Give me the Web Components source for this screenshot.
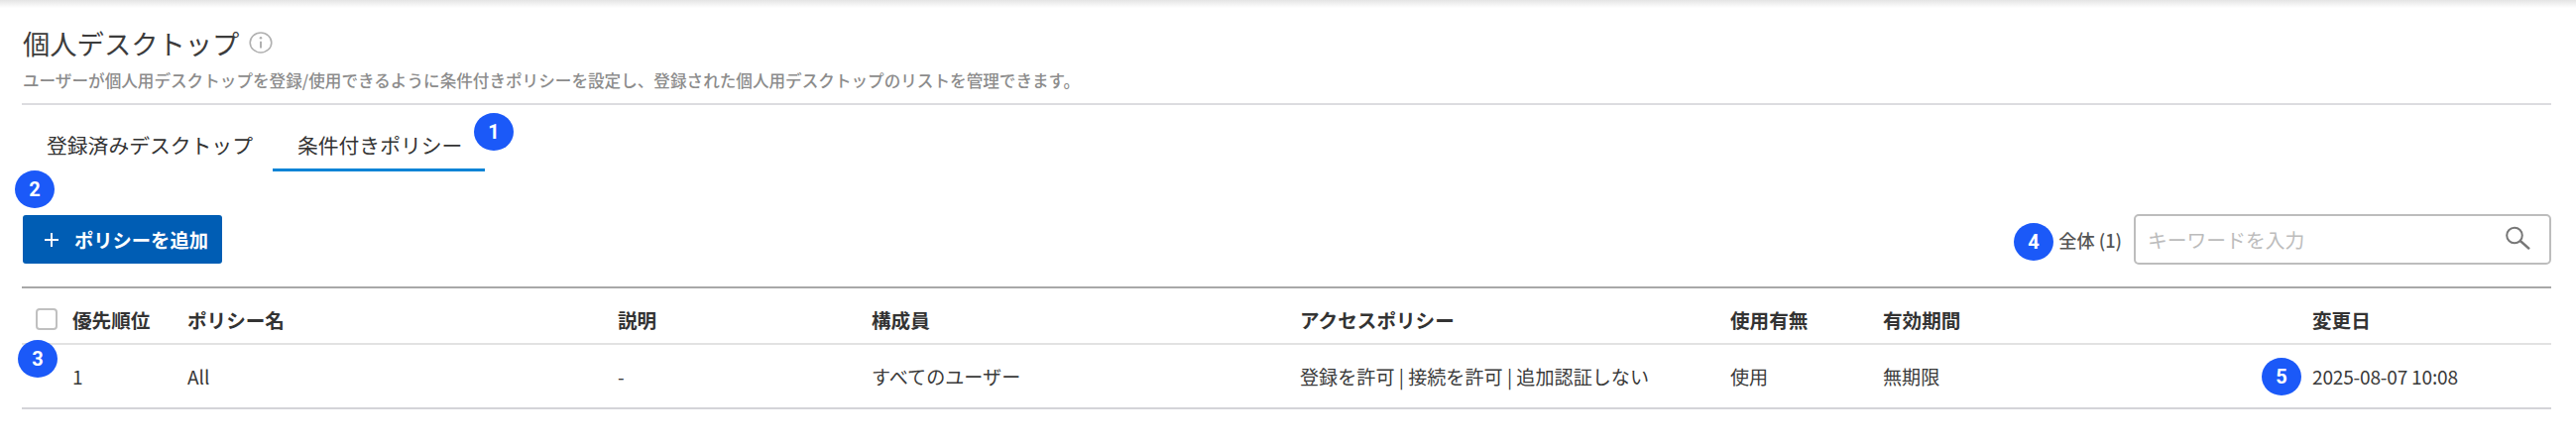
<!DOCTYPE html>
<html lang="ja">
<head>
<meta charset="utf-8">
<title>個人デスクトップ</title>
<style>
  html, body { margin: 0; background: #fff; }
  body { font-family: "Noto Sans CJK JP", "Noto Sans", sans-serif; color: #333; }
</style>
</head>
<body>
<desktop-page>
  <page-header title="個人デスクトップ">ユーザーが個人用デスクトップを登録/使用できるように条件付きポリシーを設定し、登録された個人用デスクトップのリストを管理できます。</page-header>
  <tab-bar>
    <tab-item>登録済みデスクトップ</tab-item>
    <tab-item active>条件付きポリシー</tab-item>
  </tab-bar>
  <table-toolbar count="1"></table-toolbar>
  <policy-table>
    <policy-row header>
      <span><check-box></check-box></span><span>優先順位</span><span>ポリシー名</span><span>説明</span><span>構成員</span><span>アクセスポリシー</span><span>使用有無</span><span>有効期間</span><span>変更日</span>
    </policy-row>
    <policy-row>
      <span></span><span>1</span><span>All</span><span>-</span><span>すべてのユーザー</span><span>登録を許可 | 接続を許可 | 追加認証しない</span><span>使用</span><span>無期限</span><span style="letter-spacing:-.2px">2025-08-07 10:08</span>
    </policy-row>
  </policy-table>
  <step-badge style="left:478px;top:114px">1</step-badge>
  <step-badge style="left:15px;top:172px">2</step-badge>
  <step-badge style="left:18px;top:343px">3</step-badge>
  <step-badge style="left:2031px;top:225px">4</step-badge>
  <step-badge style="left:2281px;top:361px">5</step-badge>
</desktop-page>
<script>
class DesktopPage extends HTMLElement {
  constructor() {
    super();
    this.attachShadow({ mode: 'open' });
    this.shadowRoot.innerHTML = `
      <style>
        :host {
          display: block;
          position: relative;
          height: 450px;
          box-sizing: border-box;
          padding: 0 25px 0 22px;
          overflow: hidden;
        }
        .shade {
          height: 8px;
          margin: 0 -25px 0 -22px;
          background: linear-gradient(#e4e4e4, #fff);
        }
      </style>
      <div class="shade"></div>
      <slot></slot>
    `;
  }
}

class PageHeader extends HTMLElement {
  constructor() {
    super();
    this.attachShadow({ mode: 'open' });
    this.shadowRoot.innerHTML = `
      <style>
        :host {
          display: block;
          box-sizing: border-box;
          height: 98px;
          padding-top: 12px;
          border-bottom: 2px solid #dcdce0;
        }
        .title {
          display: flex;
          align-items: center;
          gap: 10px;
          height: 46px;
          margin-left: 1px;
          font-size: 27.3px;
          color: #3c3c3c;
        }
        svg { width: 24px; height: 22px; margin-top: -1px; }
        .desc {
          margin-left: 1px;
          height: 30px;
          line-height: 30px;
          font-size: 16.6px;
          font-weight: 500;
          color: #8c8c8c;
          white-space: nowrap;
        }
      </style>
      <div class="title">
        <span id="t"></span>
        <svg viewBox="0 0 24 24" preserveAspectRatio="none" fill="none" stroke="#b0b0b0" stroke-width="1.6">
          <circle cx="12" cy="12" r="10.8"/>
          <path d="M12 10.5v7.5" stroke-width="2"/>
          <circle cx="12" cy="6.8" r="1.3" fill="#b0b0b0" stroke="none"/>
        </svg>
      </div>
      <div class="desc"><slot></slot></div>
    `;
    this.shadowRoot.querySelector('#t').textContent = this.getAttribute('title');
  }
}

class TabBar extends HTMLElement {
  constructor() {
    super();
    this.attachShadow({ mode: 'open' });
    this.shadowRoot.innerHTML = `
      <style>
        :host {
          display: flex;
          height: 67px;
          align-items: flex-end;
        }
      </style>
      <slot></slot>
    `;
  }
}

class TabItem extends HTMLElement {
  constructor() {
    super();
    this.attachShadow({ mode: 'open' });
    this.shadowRoot.innerHTML = `
      <style>
        :host {
          display: block;
          box-sizing: border-box;
          height: 50px;
          padding: 0 23px 0 25px;
          line-height: 47px;
          font-size: 20.8px;
          color: #333;
          border-bottom: 3px solid transparent;
          white-space: nowrap;
        }
        :host([active]) {
          border-bottom-color: #0a84d6;
          margin-left: -3px;
        }
      </style>
      <slot></slot>
    `;
  }
}

class TableToolbar extends HTMLElement {
  constructor() {
    super();
    this.attachShadow({ mode: 'open' });
    this.shadowRoot.innerHTML = `
      <style>
        :host {
          display: flex;
          align-items: center;
          justify-content: space-between;
          height: 51px;
          margin-top: 43px;
        }
        button {
          display: flex;
          align-items: center;
          gap: 16px;
          height: 49px;
          width: 201px;
          margin: 0 0 0 1px;
          padding: 0 0 0 22px;
          box-sizing: border-box;
          border: 0;
          border-radius: 3px;
          background: #005db4;
          color: #fff;
          font: 700 19.3px "Noto Sans CJK JP", sans-serif;
        }
        button svg { width: 14px; height: 14px; flex: none; }
        .right { display: flex; align-items: center; gap: 12px; }
        .count { font-size: 18.2px; font-weight: 500; color: #555; }
        .search {
          display: flex;
          align-items: center;
          justify-content: space-between;
          box-sizing: border-box;
          width: 421px;
          height: 51px;
          padding: 0 19px 0 12px;
          border: 2px solid #bdbdbd;
          border-radius: 5px;
          font-size: 19.8px;
          color: #bcbcbc;
        }
        .search svg { width: 25px; height: 24px; margin-top: -3px; }
      </style>
      <button>
        <svg viewBox="0 0 14 14" stroke="#fff" stroke-width="2"><path d="M7 0v14M0 7h14"/></svg>
        <span>ポリシーを追加</span>
      </button>
      <div class="right">
        <span class="count">全体 (${this.getAttribute('count')})</span>
        <div class="search">
          <span>キーワードを入力</span>
          <svg viewBox="0 0 25 24" fill="none" stroke="#777" stroke-width="2">
            <circle cx="9" cy="9.5" r="7.8"/>
            <path d="M14.8 15l9.2 8.2" stroke-width="2.4"/>
          </svg>
        </div>
      </div>
    `;
  }
}

class PolicyTable extends HTMLElement {
  constructor() {
    super();
    this.attachShadow({ mode: 'open' });
    this.shadowRoot.innerHTML = `
      <style>
        :host {
          display: block;
          margin-top: 22px;
          border-top: 2px solid #a8a8a8;
        }
      </style>
      <slot></slot>
    `;
  }
}

class PolicyRow extends HTMLElement {
  constructor() {
    super();
    this.attachShadow({ mode: 'open' });
    this.shadowRoot.innerHTML = `
      <style>
        :host {
          display: grid;
          grid-template-columns: 37px 116px 434px 256px 432px 434px 154px 433px 1fr;
          align-items: center;
          box-sizing: border-box;
          height: 65px;
          padding: 0 0 0 14px;
          border-bottom: 2px solid #d4d4d8;
          font-size: 19.1px;
          color: #3a3a3a;
          white-space: nowrap;
        }
        :host([header]) {
          height: 57px;
          padding-top: 7px;
          border-bottom-color: #e2e2e2;
          font-size: 19.6px;
          font-weight: 700;
          color: #333;
        }
      </style>
      <slot></slot>
    `;
  }
}

class CheckBox extends HTMLElement {
  constructor() {
    super();
    this.attachShadow({ mode: 'open' });
    this.shadowRoot.innerHTML = `
      <style>
        :host {
          display: block;
          box-sizing: border-box;
          width: 22px;
          height: 22px;
          border: 2px solid #c0c0c0;
          border-radius: 4px;
          background: #fff;
        }
      </style>
    `;
  }
}

class StepBadge extends HTMLElement {
  constructor() {
    super();
    this.attachShadow({ mode: 'open' });
    this.shadowRoot.innerHTML = `
      <style>
        :host {
          position: absolute;
          display: flex;
          align-items: center;
          justify-content: center;
          width: 40px;
          height: 38px;
          border-radius: 50%;
          background: #1b59f8;
          color: #fff;
          font: 700 20px "Roboto", "Noto Sans", sans-serif;
        }
      </style>
      <slot></slot>
    `;
  }
}

customElements.define('desktop-page', DesktopPage);
customElements.define('page-header', PageHeader);
customElements.define('tab-bar', TabBar);
customElements.define('tab-item', TabItem);
customElements.define('table-toolbar', TableToolbar);
customElements.define('policy-table', PolicyTable);
customElements.define('policy-row', PolicyRow);
customElements.define('check-box', CheckBox);
customElements.define('step-badge', StepBadge);
</script>
</body>
</html>
